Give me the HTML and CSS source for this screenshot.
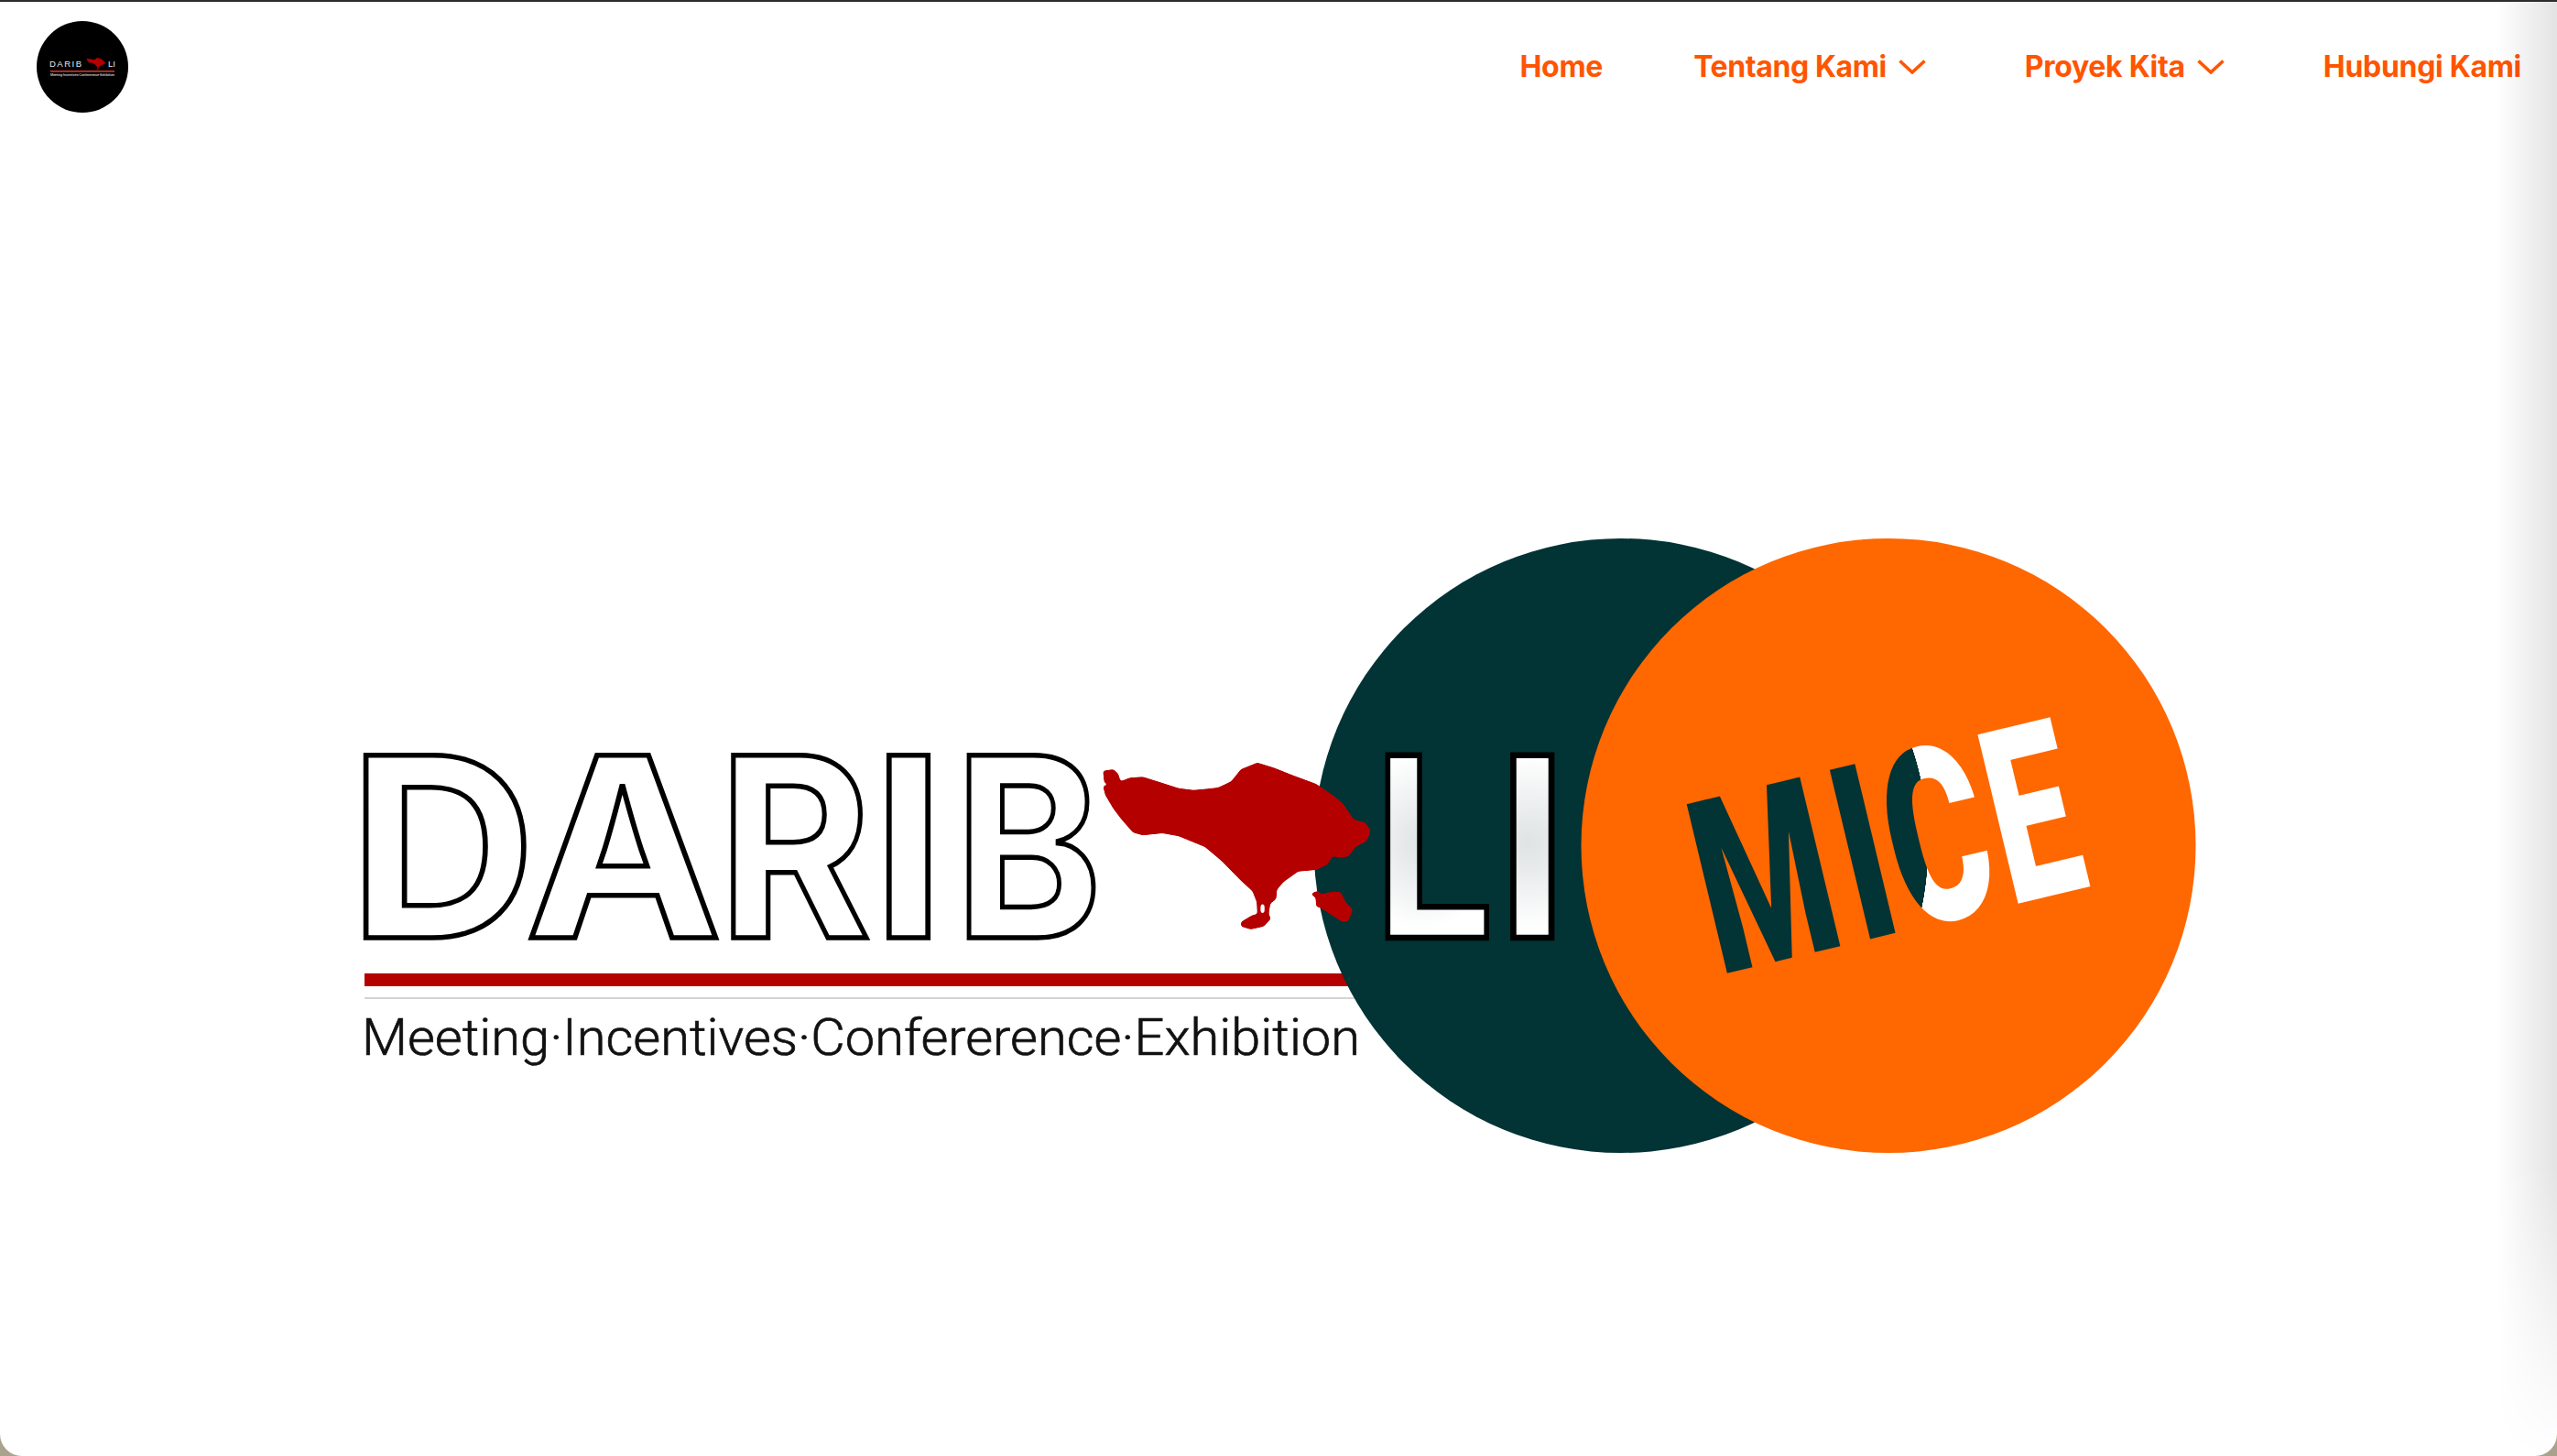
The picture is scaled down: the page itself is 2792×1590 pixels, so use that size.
FILE: index.html
```html
<!DOCTYPE html>
<html lang="id">
<head>
<meta charset="utf-8">
<title>Dari Bali MICE</title>
<link rel="stylesheet" href="styles.css">
</head>
<body>
<div class="window">
  <header class="site-header">
    <a class="brand" href="#" aria-label="Dari Bali">
      <svg class="brand-mark" viewBox="40 22 100 100" width="100" height="100">
        <circle cx="90" cy="72" r="50" fill="#000"/>
        <text class="brand-word" x="54" y="72" textLength="35" lengthAdjust="spacing">DARIB</text>
        <path class="island" transform="translate(95 62) scale(.0245 .024) translate(-68 -128)" d="M68 155 100 150 115 165 122 190 150 178 190 175 250 195 300 212 345 218 420 210 460 190 490 150 540 128 590 145 650 170 720 198 770 235 800 260 835 315 870 325 887 352 875 385 840 405 820 435 795 440 770 435 755 462 720 480 665 485 620 520 600 545 598 575 580 590 575 625 582 640 560 665 520 675 490 665 490 650 525 628 540 625 538 585 525 550 490 515 430 450 380 405 300 370 250 360 190 367 160 358 125 315 100 280 75 235Z"/>
        <text class="brand-word" x="118" y="72" textLength="8" lengthAdjust="spacing">LI</text>
        <rect x="55" y="76" width="70" height="1.7" fill="#c8302c"/>
        <text class="brand-tag" x="55" y="82" textLength="70" lengthAdjust="spacingAndGlyphs">Meeting·Incentives·Confererence·Exhibition</text>
      </svg>
    </a>
    <nav class="main-nav">
      <a class="nav-link nav-home" href="#">Home</a>
      <a class="nav-link nav-about" href="#">Tentang Kami
        <svg class="chevron" viewBox="0 0 30 16" width="30" height="16"><path d="M1.5 1.5 15 14 28.5 1.5"/></svg>
      </a>
      <a class="nav-link" href="#">Proyek Kita
        <svg class="chevron" viewBox="0 0 30 16" width="30" height="16"><path d="M1.5 1.5 15 14 28.5 1.5"/></svg>
      </a>
      <a class="nav-link" href="#">Hubungi Kami</a>
    </nav>
  </header>
  <main class="hero">
    <svg class="hero-art" viewBox="0 144 2792 1446" width="2792" height="1446">
      <defs>
        <radialGradient id="mice-fill" gradientUnits="userSpaceOnUse" cx="-79.4" cy="-162.4" r="335.5" gradientTransform="scale(1.6129 1)">
          <stop offset="0.999" stop-color="#023335"/>
          <stop offset="1" stop-color="#fff"/>
        </radialGradient>
        <radialGradient id="l-fill" gradientUnits="userSpaceOnUse" cx="62" cy="-104" r="95">
          <stop offset="0" stop-color="#dfe3e4"/>
          <stop offset="0.5" stop-color="#eef0f1"/>
          <stop offset="1" stop-color="#fff"/>
        </radialGradient>
        <radialGradient id="i-fill" gradientUnits="userSpaceOnUse" cx="34" cy="-104" r="95">
          <stop offset="0" stop-color="#dfe3e4"/>
          <stop offset="0.5" stop-color="#eef0f1"/>
          <stop offset="1" stop-color="#fff"/>
        </radialGradient>
        <filter id="soften" x="-5%" y="-5%" width="110%" height="110%">
          <feGaussianBlur stdDeviation="5 5"/>
          <feComponentTransfer>
            <feFuncA type="linear" slope="5" intercept="-2"/>
          </feComponentTransfer>
        </filter>
      </defs>
      <g class="logo-word"><text class="logo-outline" transform="translate(381 1024) scale(1.03 1)">D</text><text class="logo-outline" transform="translate(573.5 1024) scale(1.05 1)">A</text><text class="logo-outline" transform="translate(784 1024) scale(.93 1)">R</text><text class="logo-outline" transform="translate(952 1024) scale(1.04 1)">I</text><text class="logo-outline" transform="translate(1042 1024) scale(.89 1)">B</text></g>
      <rect x="398" y="1063" width="1100" height="14" fill="#b50000"/>
      <rect x="398" y="1089" width="1100" height="2" fill="#d4d4d4"/>
      <text class="logo-tagline" x="395" y="1152" textLength="1090" lengthAdjust="spacingAndGlyphs">Meeting·Incentives·Confererence·Exhibition</text>
      <circle cx="1770" cy="923.5" r="335.5" fill="#023335"/>
      <g transform="translate(1180 790) scale(.35714 .33333)" filter="url(#soften)">
        <path class="island" fill-rule="evenodd" d="M68 155 100 150 115 165 122 190 150 178 190 175 250 195 300 212 345 218 390 214 420 210 460 190 490 150 540 128 590 145 650 170 720 198 770 235 800 260 835 315 870 325 887 352 875 385 840 405 820 435 795 440 770 435 755 462 720 480 665 485 620 520 600 545 598 575 580 590 575 625 582 640 560 665 520 675 490 665 490 650 525 628 540 625 538 585 525 550 490 515 430 450 380 405 300 370 250 360 190 367 160 358 125 315 100 280 75 235 68 205 90 200 72 195Z M550 592 562 592 562 622 550 622Z"/>
        <path class="island" d="M708 555 725 548 735 560 760 553 795 552 810 585 832 610 825 630 818 648 800 650 770 630 735 605 720 600 718 570 705 562Z"/>
      </g>
      <g class="logo-word"><text class="logo-outline logo-li logo-l" transform="translate(1500 1024) scale(.85 1)">L</text><text class="logo-outline logo-li logo-i" transform="translate(1634 1024) scale(1.02 1)">I</text></g>
      <circle cx="2062" cy="923.5" r="335.5" fill="#ff6700"/>
      <g transform="rotate(-13.46 1885 1063) translate(1885 1063) scale(.62 1)">
        <text class="logo-mice" y="0" x="-13 243 329 514" fill="url(#mice-fill)">MICE</text>
      </g>
    </svg>
  </main>
</div>
</body>
</html>
```
FILE: styles.css
```css
html, body {
  margin: 0;
  height: 100%;
  overflow: hidden;
  background: #a9a28d;
}

.window {
  position: relative;
  box-sizing: border-box;
  display: flex;
  flex-direction: column;
  height: 1590px;
  overflow: hidden;
  background: #fff;
  border-top: 2px solid #2b2b30;
  border-radius: 0 0 24px 24px;
  font-family: Inter, "Liberation Sans", sans-serif;
}

.window::after {
  content: "";
  position: absolute;
  top: 0;
  right: 0;
  bottom: 0;
  width: 66px;
  pointer-events: none;
  background: linear-gradient(to right, rgba(0, 0, 0, 0), rgba(0, 0, 0, .11));
  -webkit-mask-image: linear-gradient(to bottom, #000 80%, transparent 100%);
  mask-image: linear-gradient(to bottom, #000 80%, transparent 100%);
}

.site-header {
  flex: none;
  display: flex;
  align-items: center;
  justify-content: space-between;
  height: 142px;
  padding: 0 39px 0 40px;
}

.brand, .brand-mark {
  display: block;
}

.brand-word {
  font-family: "Liberation Sans", sans-serif;
  font-size: 9.5px;
  fill: #e8e8e8;
}

.brand-tag {
  font-family: Roboto, sans-serif;
  font-size: 4px;
  fill: #fff;
}

.main-nav {
  display: flex;
  align-items: center;
  gap: 108px;
}

.nav-link {
  display: flex;
  align-items: center;
  gap: 13px;
  color: #ff5500;
  font-size: 32px;
  font-weight: 650;
  letter-spacing: -.3px;
  line-height: 40px;
  text-decoration: none;
  white-space: nowrap;
}

.nav-home {
  margin-right: -9px;
}

.nav-about {
  letter-spacing: -.4px;
}

.chevron {
  flex: none;
  fill: none;
  stroke: #ff5500;
  stroke-width: 3.6;
}

.hero {
  flex: 1;
  min-height: 0;
}

.hero-art {
  display: block;
}

.island {
  fill: #b50000;
}

.logo-outline {
  font-family: Inter, sans-serif;
  font-size: 274px;
  font-weight: 700;
  fill: #fff;
  stroke: #000;
  stroke-width: 5.5;
}

.logo-li {
  stroke-width: 6.5;
}

.logo-l {
  fill: url(#l-fill);
}

.logo-i {
  fill: url(#i-fill);
}

.logo-tagline {
  font-family: Roboto, sans-serif;
  font-size: 56px;
  font-weight: 300;
  fill: #111;
  stroke: #111;
  stroke-width: .7;
}

.logo-mice {
  font-family: Roboto, sans-serif;
  font-size: 267px;
  font-weight: 900;
}
```
